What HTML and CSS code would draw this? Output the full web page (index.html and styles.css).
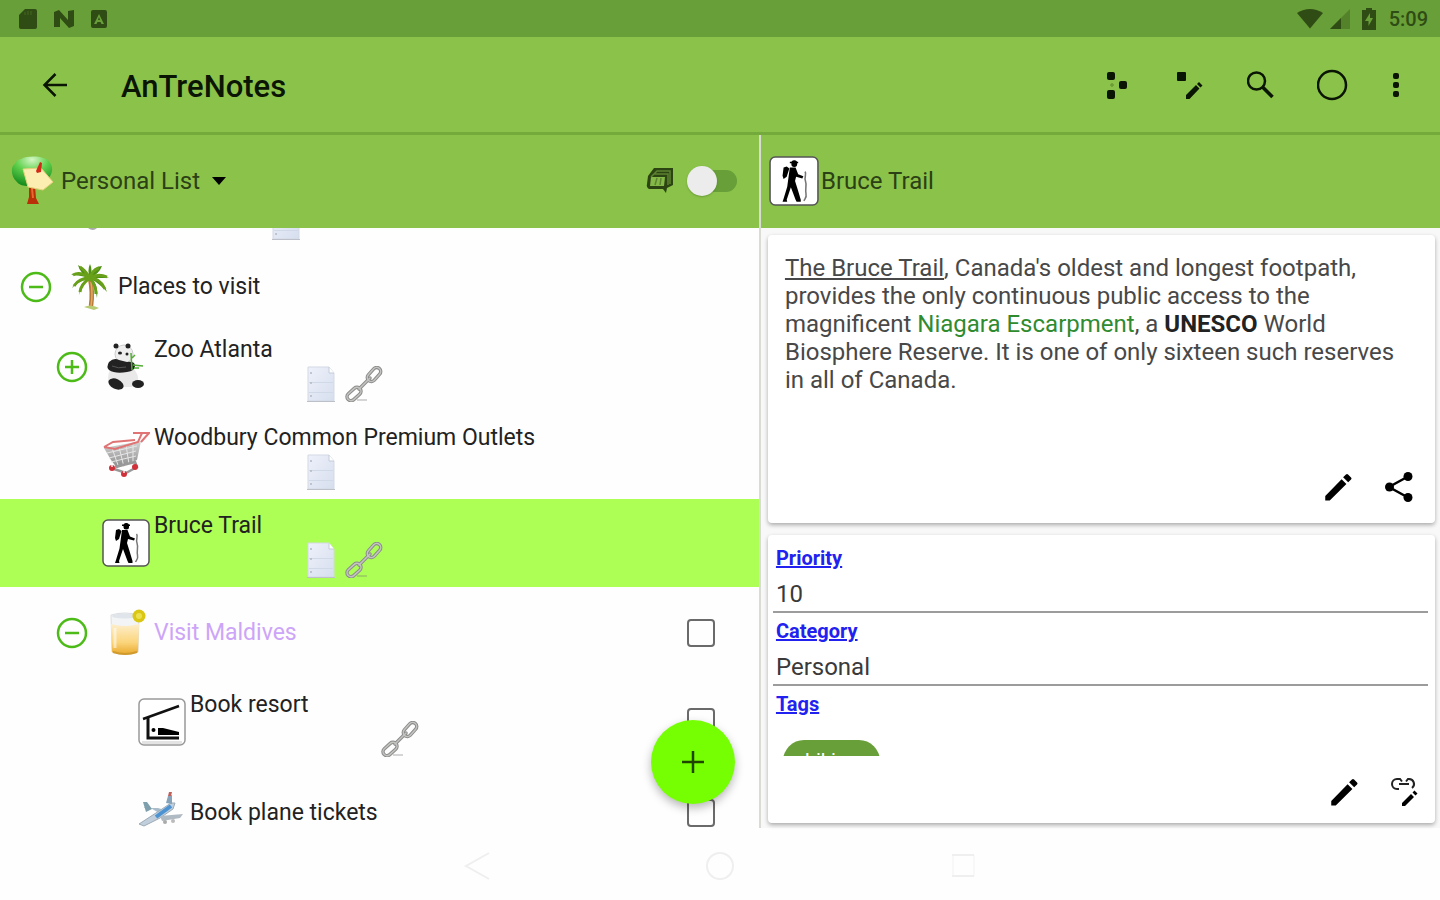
FILE: index.html
```html
<!DOCTYPE html>
<html lang="en">
<head>
<meta charset="utf-8">
<title>AnTreNotes</title>
<link rel="stylesheet" href="styles.css">
</head>
<body>
<svg class="sprite" aria-hidden="true">
  <defs>
    <linearGradient id="paper" x1="0" y1="0" x2="1" y2="1"><stop offset="0" stop-color="#eef1fa"/><stop offset="1" stop-color="#d6deee"/></linearGradient>
    <linearGradient id="juice" x1="0" y1="0" x2="0" y2="1"><stop offset="0" stop-color="#fdeecb"/><stop offset=".6" stop-color="#fbd57c"/><stop offset="1" stop-color="#e9a92c"/></linearGradient>
    <radialGradient id="leaf" cx=".5" cy=".1" r=".9"><stop offset="0" stop-color="#d5f7c6"/><stop offset=".45" stop-color="#5fd04c"/><stop offset="1" stop-color="#138a1c"/></radialGradient>
    <linearGradient id="steel" x1="0" y1="0" x2="0" y2="1"><stop offset="0" stop-color="#d5d5d5"/><stop offset="1" stop-color="#8b8b8b"/></linearGradient>
  </defs>
  <symbol id="pencil" viewBox="0 0 24 24"><path d="M3.500 18V21h3L17.600 10l-3.200-3.200zM20.700 7a1 1 0 0 0 0-1.400l-2-2a1 1 0 0 0-1.400 0l-1.900 1.900 3.400 3.400z"/></symbol>
  <symbol id="minus" viewBox="0 0 32 32"><circle cx="16" cy="16" r="14" fill="none" stroke="#4cbb17" stroke-width="2.500"/><path d="M9 16h14" stroke="#4cbb17" stroke-width="2.500"/></symbol>
  <symbol id="plus" viewBox="0 0 32 32"><circle cx="16" cy="16" r="14" fill="none" stroke="#4cbb17" stroke-width="2.500"/><path d="M9 16h14M16 9v14" stroke="#4cbb17" stroke-width="2.500"/></symbol>
  <symbol id="note" viewBox="0 0 30 36"><path d="M2 1h21l5 6v28H2z" fill="url(#paper)" stroke="#d3d9e4"/><path d="M23 1v6h5" fill="#fff" stroke="#c4ccd8"/><path d="M3 16.500h24M3 26.500h24" stroke="#cfd9e8"/><path d="M1 35.500h28" stroke="#bdc0c8"/><circle cx="5" cy="7" r="1" fill="#b2b9c5"/><circle cx="5" cy="17" r="1" fill="#b2b9c5"/><circle cx="5" cy="30" r="1" fill="#b2b9c5"/></symbol>
  <symbol id="chain" viewBox="0 0 38 36"><path d="M12 34h10" stroke="#777" stroke-opacity=".3" stroke-width="2"/><g fill="none" stroke="#8c8c8c" stroke-width="3.500"><rect x="-8" y="-4" width="16" height="8" rx="4" transform="translate(29 8.500) rotate(-48)"/><rect x="-8" y="-4" width="16" height="8" rx="4" transform="translate(9 28) rotate(-42)"/><path d="M14 23L25 12" stroke-linecap="round"/></g><g fill="none" stroke="#c4c4c0" stroke-width="1.500"><rect x="-8" y="-4" width="16" height="8" rx="4" transform="translate(29 8.500) rotate(-48)"/><rect x="-8" y="-4" width="16" height="8" rx="4" transform="translate(9 28) rotate(-42)"/><path d="M14 23L25 12" stroke-linecap="round"/></g></symbol>
  <symbol id="hiker" viewBox="0 0 48 48"><rect x="1" y="1" width="46" height="46" rx="5" fill="#fff" stroke="#555" stroke-width="1.500"/><rect x="21.500" y="4" width="5.500" height="6.500" rx="2.500"/><path d="M20 5.500h8v1.500h-8zM14 11l3-1 2.500 2-2.500 8-3 2-1-3z"/><path d="M20 11h5.500l2.500 6.500 5 2-1 2-6-1.500-1 4 2.500 8 3 10v2h-4l-1-2-4.500-12-4 12 .5 2H13l1-3 3.500-11.500z"/><path d="M34.500 15c2 2-1 5 .5 9s-.5 8 .5 12-1 5-2 7" fill="none" stroke="#777" stroke-width="1.500"/></symbol>
</svg>

<header class="status-bar">
  <div class="status-group">
    <svg width="20" height="22" viewBox="0 0 20 22"><path d="M7 1h10a2 2 0 0 1 2 2v16a2 2 0 0 1-2 2H3a2 2 0 0 1-2-2V7z"/><path d="M7 4v3M10 3v4M13 3v4" stroke="#44691f"/></svg>
    <svg width="22" height="20" viewBox="0 0 22 20"><path d="M1 18V3l5-2 9 10V2l6-1v16l-5 2L7 9v9z"/></svg>
    <svg width="18" height="20" viewBox="0 0 18 20"><path d="M3 1h12a2 2 0 0 1 2 2v14a2 2 0 0 1-2 2H3a2 2 0 0 1-2-2V3a2 2 0 0 1 2-2zm6 4L4 15h2.500l1-2h3l1 2H14zm0 3l1 3H8z" fill-rule="evenodd"/></svg>
  </div>
  <div class="status-group status-right">
    <svg width="26" height="20" viewBox="0 0 26 20"><path d="M13 19.500L0 4q13-8 26 0z"/></svg>
    <svg width="22" height="20" viewBox="0 0 22 20"><path d="M21 0v20H1z" opacity=".35"/><path d="M12 9v11H1z"/></svg>
    <svg class="battery" width="16" height="22" viewBox="0 0 16 22"><path d="M5 0h6v2h4v20H1V2h4zm4 5L4 13h3.500v5l4.500-8H9z" fill-rule="evenodd"/></svg>
    <span class="clock">5:09</span>
  </div>
</header>

<div class="app-bar">
  <button class="back" aria-label="Back"><svg width="26" height="26" viewBox="0 0 26 26" fill="none" stroke="#0b1503" stroke-width="2.500"><path d="M25 13H3M13.500 2L2.500 13l11 11"/></svg></button>
  <h1>AnTreNotes</h1>
  <button class="action" aria-label="Tree view"><svg width="24" height="30" viewBox="0 0 24 30"><rect x="2" y="2" width="8" height="8" rx="2"/><rect x="2" y="20" width="8" height="9" rx="2"/><rect x="14" y="11" width="8" height="8" rx="2"/><path d="M7 13v4M5 15h4" stroke="#6c9a35" stroke-width="1.500"/></svg></button>
  <button class="action" aria-label="Edit node"><svg width="28" height="30" viewBox="0 0 28 30"><rect x="2" y="2" width="9" height="9" rx="1"/><path d="M11 29v-4l10-10 3.500 3.500L14.500 29zM22 14l2-2 3.500 3.500-2 2z"/></svg></button>
  <button class="action" aria-label="Search"><svg width="28" height="28" viewBox="0 0 28 28" fill="none" stroke="#0b1503"><circle cx="9.500" cy="10" r="8.500" stroke-width="2.500"/><path d="M15.500 16l10 10" stroke-width="3.500"/></svg></button>
  <button class="action" aria-label="Record"><svg width="32" height="32" viewBox="0 0 32 32" fill="none" stroke="#0b1503" stroke-width="2.500"><circle cx="15" cy="16" r="14"/></svg></button>
  <button class="action more" aria-label="More options"><svg width="8" height="26" viewBox="0 0 8 26"><rect x="1" y="1" width="6" height="6" rx="2"/><rect x="1" y="10" width="6" height="6" rx="2"/><rect x="1" y="19" width="6" height="6" rx="2"/></svg></button>
</div>

<main class="panes">
  <section class="tree-pane">
    <div class="pane-head">
      <svg width="43" height="50" viewBox="0 0 43 50"><path d="M18 30h6l1 12 3 6H16l2-7z" fill="#b92f08"/><path d="M21 32l1 10" stroke="#e66a30" stroke-width="2"/><path d="M10 3C16 0 26 0 32 2c6 1 10 7 9 13-1 8-10 13-19 13-6 4-14 1-16-2C-1 20 0 9 4 8c1-3 3-4 6-5z" fill="url(#leaf)"/><path d="M12 13l18-1 12 14-10 8-15-3z" fill="#fbeeb0" stroke="#e4d27c"/><path d="M25 15l4-9 2 1-1 9-4 1z" fill="#d12a16"/></svg>
      <div class="picker"><select aria-label="List"><option>Personal List</option></select><svg width="14" height="8" viewBox="0 0 14 8"><path d="M0 0h14L7 8z"/></svg></div>
      <svg class="layers" width="30" height="28" viewBox="0 0 30 28"><path d="M9 1h19v17l-6 3-1 5-3-4H4q-3-2-2-5l1-8z" fill="#2c4312"/><path d="M6 10h14l-1 9H5z" fill="#84b947"/><path d="M8 8l4-4h13v13M6 10l3-3h14v11M12 11l-2 7M16 11l-1 7" fill="none" stroke="#5c8331" stroke-width="1.500"/></svg>
      <input type="checkbox" role="switch" class="switch" aria-label="Show layers">
    </div>

    <div class="tree">
      <div class="row cut">
        <svg width="14" height="4" viewBox="0 0 14 4"><path d="M2 0q5 4 9 0z" fill="#aaa"/></svg>
        <svg width="30" height="36"><use href="#note"/></svg>
      </div>
      <div class="row">
        <button class="toggle" aria-label="Collapse"><svg width="32" height="32"><use href="#minus"/></svg></button>
        <svg class="pic" viewBox="0 0 48 48"><path d="M24 15q3 14 1 28" fill="none" stroke="#b97a35" stroke-width="4.500"/><path d="M25 19q2 12 0 24" fill="none" stroke="#e0a96a" stroke-width="1.500"/><path d="M18 44q7-3 15 1l-5 2z" fill="#b7cb72"/><g fill="#4d8f12"><path d="M24 15Q18 5 12 2q2 9 12 13zM24 15Q13 7 5 12q8 0 19 3zM24 15Q12 13 6 25q5-6 18-10zM24 15q-11 4-11 17 2-9 11-17zM24 15q10-4 19 0-8 0-19 0zM24 15q12 0 17 14-6-7-17-14zM24 15q9 6 7 20-1-9-7-20zM24 15q3-12 12-12-3 8-12 12zM24 15q-3-8 0-14 3 6 0 14z"/></g><g fill="none" stroke="#69a01a" stroke-width="3"><path d="M24 15Q14 8 7 12M24 15Q13 15 8 23M24 15q-9 6-10 14M24 15q10 0 15 11M24 15q6 7 6 16M24 15q8-5 17-1M24 15Q19 7 14 4M24 15q2-8 9-10"/></g></svg>
        <span class="label">Places to visit</span>
      </div>
      <div class="row level-1 tall">
        <button class="toggle" aria-label="Expand"><svg width="32" height="32"><use href="#plus"/></svg></button>
        <svg class="pic" viewBox="0 0 48 48"><path d="M8 27q-4 8 0 17h22l6-5q1-8-5-14z" fill="#e9e9e9"/><ellipse cx="22" cy="11" rx="9" ry="9" fill="#eee" stroke="#ccc"/><g fill="#222"><circle cx="14" cy="3" r="2.500"/><circle cx="26" cy="3" r="2.500"/><ellipse cx="18" cy="10" rx="2" ry="1.500"/><ellipse cx="25" cy="11" rx="1.500" ry="1.500"/><path d="M7 19q5-5 10-2l8 2q8-1 8 4t-8 6q-12 2-18-2-3-3 0-8z"/><ellipse cx="14" cy="41" rx="8" ry="5" transform="rotate(25 14 41)"/><ellipse cx="36" cy="41" rx="6" ry="4"/></g><path d="M10 23q6 3 14 1" stroke="#555" fill="none"/><path d="M29 10l1 17M31 22l10 1M30 15l3-3M32 25l5 0" stroke="#52ae35" stroke-width="1.500"/></svg>
        <div class="label">Zoo Atlanta<div class="marks"><svg width="30" height="36"><use href="#note"/></svg><svg width="38" height="36"><use href="#chain"/></svg></div></div>
      </div>
      <div class="row level-1 tall">
        <span class="toggle"></span>
        <svg class="pic" viewBox="0 0 48 48"><path d="M2 17l37-7-4 19-20 8-6-8z" fill="url(#steel)"/><g fill="none" stroke="#e6e6e6"><path d="M5 22l30-7M7 27l27-7M9 31l25-6M10 17l7 20M17 16l5 20M24 14l3 19M31 13l0 18"/></g><path d="M13 36l20-5 2 5-11 6-12-4" fill="none" stroke="#999" stroke-width="2.500"/><path d="M2 16l11 2 23-7 4-9h6M31 2h16l-8 9M2 16l9-5 22-2" fill="none" stroke="#e07474" stroke-width="2"/><g fill="#d0303a"><circle cx="10" cy="37" r="3"/><circle cx="22" cy="43" r="3"/><circle cx="33" cy="36" r="3"/></g><g fill="#eee"><circle cx="10" cy="35" r="1"/><circle cx="22" cy="41" r="1"/></g></svg>
        <div class="label">Woodbury Common Premium Outlets<div class="marks"><svg width="30" height="36"><use href="#note"/></svg></div></div>
      </div>
      <div class="row level-1 tall selected">
        <span class="toggle"></span>
        <svg class="pic"><use href="#hiker"/></svg>
        <div class="label">Bruce Trail<div class="marks"><svg width="30" height="36"><use href="#note"/></svg><svg width="38" height="36"><use href="#chain"/></svg></div></div>
      </div>
      <div class="row level-1 roomy">
        <button class="toggle" aria-label="Collapse"><svg width="32" height="32"><use href="#minus"/></svg></button>
        <svg class="pic" viewBox="0 0 48 48"><path d="M9 6q14-4 28 0l-1 37q-12 5-26 0z" fill="#f2f4f6" stroke="#dcdee0"/><path d="M9 15q14 4 28 0l-1 28q-12 5-26 0z" fill="url(#juice)"/><path d="M13 19v20" stroke="#fff" stroke-opacity=".5" stroke-width="3"/><ellipse cx="23" cy="7" rx="13" ry="2.500" fill="#dfe5ea"/><path d="M11 43q12 4 24 0" stroke="#d19a2c" stroke-width="2" fill="none"/><circle cx="37" cy="7" r="6.500" fill="#d9c713"/><circle cx="37" cy="7" r="3" fill="#ece04e"/></svg>
        <label class="label done" for="maldives">Visit Maldives</label>
        <input type="checkbox" class="check" id="maldives">
      </div>
      <div class="row level-2 tall">
        <span class="toggle"></span>
        <svg class="pic" viewBox="0 0 48 48"><rect x="1" y="1" width="46" height="46" rx="5" fill="#fff" stroke="#999" stroke-width="1.500"/><path d="M4 43h40v3H4z" fill="#e3e3e3"/><path d="M5 21L41 8" stroke="#111" stroke-width="2.500"/><path d="M10 20v20h31" fill="none" stroke="#111" stroke-width="3"/><circle cx="15.500" cy="32" r="2"/><path d="M20 30h5l16 4v3H20z"/></svg>
        <div class="label"><label for="resort">Book resort</label><div class="marks"><span class="slot"></span><svg width="38" height="36"><use href="#chain"/></svg></div></div>
        <input type="checkbox" class="check" id="resort">
      </div>
      <div class="row level-2 roomy plane">
        <span class="toggle"></span>
        <svg class="pic" viewBox="0 0 48 48"><path d="M5 18l6 0 10 6 9-2-10-3" fill="#a9bccb"/><path d="M5 13l4 0 5 7-6 3z" fill="#7e9fac"/><path d="M1 35l20-13 12-8 4 0-2 6-13 9-16 8z" fill="#c0cfdb" stroke="#9dabb8"/><path d="M18 28l15-11" stroke="#4d93d2" stroke-width="4"/><path d="M22 27l23-2-3 4-18 3z" fill="#b0bac3"/><path d="M28 14l2-7 4-1 0 9z" fill="#86a3ba"/><path d="M30 7l1-4 3 0-1 4z" fill="#c0605a"/><circle cx="27" cy="33" r="2" fill="#aaa"/><circle cx="35" cy="32" r="2" fill="#bbb"/></svg>
        <label class="label" for="plane">Book plane tickets</label>
        <input type="checkbox" class="check" id="plane">
      </div>
    </div>
    <button class="fab" aria-label="Add"><svg width="22" height="22" viewBox="0 0 22 22" stroke="#1f4400" stroke-width="2.500"><path d="M0 11h22M11 0v22"/></svg></button>
  </section>

  <section class="detail-pane">
    <div class="pane-head">
      <svg width="50" height="50"><use href="#hiker"/></svg>
      <h2>Bruce Trail</h2>
    </div>
    <div class="cards">
      <article class="card">
        <p class="note-text"><u>The Bruce Trail</u>, Canada's oldest and longest footpath,<br>provides the only continuous public access to the<br>magnificent <a href="#">Niagara Escarpment</a>, a <b>UNESCO</b> World<br>Biosphere Reserve. It is one of only sixteen such reserves<br>in all of Canada.</p>
        <div class="card-actions">
          <button aria-label="Edit note"><svg width="36" height="36"><use href="#pencil"/></svg></button>
          <button aria-label="Share"><svg width="30" height="32" viewBox="0 0 30 32"><path d="M24 5.500L5 16l19 10.500" fill="none" stroke="#000" stroke-width="2.500"/><circle cx="24" cy="5.500" r="4.500"/><circle cx="5.500" cy="16" r="4.500"/><circle cx="24" cy="26.500" r="4.500"/></svg></button>
        </div>
      </article>
      <article class="card">
        <div class="fields">
          <label for="priority">Priority</label>
          <input type="text" id="priority" value="10">
          <label for="category">Category</label>
          <input type="text" id="category" value="Personal">
          <span class="field-name">Tags</span>
          <div class="chips"><span class="chip">hiking</span></div>
        </div>
        <div class="card-actions low">
          <button aria-label="Edit fields"><svg width="36" height="36"><use href="#pencil"/></svg></button>
          <button aria-label="Edit links"><svg width="30" height="32" viewBox="0 0 30 32"><path d="M9 13H7a5 5 0 0 1 0-10h3l2 2.500M9 8h10M16 5.500L18 3h1a5 5 0 0 1 3 9" fill="none" stroke="#222" stroke-width="2"/><path d="M12 30v-3l9-9 3 3-9 9zM22.500 16.500l2-2 3 3-2 2z"/></svg></button>
        </div>
      </article>
    </div>
  </section>
</main>

<nav class="system-nav">
  <button aria-label="System back"><svg width="32" height="32" viewBox="0 0 32 32"><path d="M28 3L5 16l23 13"/></svg></button>
  <button aria-label="Home"><svg width="32" height="32" viewBox="0 0 32 32"><circle cx="16" cy="16" r="13"/></svg></button>
  <button aria-label="Recent apps"><svg width="32" height="32" viewBox="0 0 32 32"><path d="M6 5v21M27 5v21" stroke-opacity=".4"/><path d="M5 5h22M5 26h22"/></svg></button>
</nav>
</body>
</html>
```
FILE: styles.css
```css
* { box-sizing: border-box; }

body {
  margin: 0;
  height: 100vh;
  display: flex;
  flex-direction: column;
  overflow: hidden;
  background: #fefefe;
  color: #222;
  font-family: Roboto, "Liberation Sans", sans-serif;
  font-size: 24px;
  line-height: 28px;
}

svg { display: block; flex: none; }

button {
  display: flex;
  align-items: center;
  justify-content: center;
  padding: 0;
  border: 0;
  background: none;
  cursor: pointer;
}

h1, h2, p { margin: 0; }

.sprite {
  position: absolute;
  width: 0;
  height: 0;
  overflow: hidden;
}

/* Bars */
.status-bar {
  flex: none;
  height: 37px;
  padding: 0 12px 0 18px;
  display: flex;
  align-items: center;
  justify-content: space-between;
  background: #689f38;
  color: #2f4c14;
  fill: #2f4c14;
}
.status-group { display: flex; align-items: center; gap: 15px; }
.status-right { gap: 4px; }
.status-right svg:first-child { margin-right: 2px; }
.battery { margin-left: 6px; }
.clock { margin-left: 8px; font-size: 20px; font-weight: 500; }

.app-bar {
  flex: none;
  height: 98px;
  padding: 0 17px 0 32px;
  display: flex;
  align-items: center;
  background: #8bc34a;
  border-bottom: 3px solid #74a93b;
  fill: #0b1503;
}
.back { width: 46px; height: 48px; }
.app-bar h1 {
  flex: 1;
  margin-left: 43px;
  padding-top: 4px;
  font-size: 31px;
  font-weight: 500;
  line-height: 36px;
  color: #0b1503;
}
.action { width: 72px; height: 48px; }
.more { width: 54px; }

.panes { flex: 1; min-height: 0; display: flex; }

.pane-head {
  flex: none;
  height: 93px;
  display: flex;
  align-items: center;
  background: #8bc34a;
}
.pane-head h2, .picker select {
  font: inherit;
  color: #2c4015;
}

/* Tree */
.tree-pane {
  flex: 760;
  min-width: 0;
  position: relative;
  display: flex;
  flex-direction: column;
  border-right: 2px solid #d8dcd4;
}
.tree-pane .pane-head { padding: 0 22px 2px 11px; }
.picker { display: flex; align-items: center; gap: 11px; margin-left: 7px; flex: 1; }
.picker select {
  appearance: none;
  padding: 0;
  border: 0;
  background: none;
}
.layers { margin-right: 24px; }
.switch {
  appearance: none;
  width: 38px;
  height: 22px;
  margin: 0;
  display: flex;
  align-items: center;
  border-radius: 11px;
  background: #689f38;
}
.switch::before {
  content: "";
  flex: none;
  width: 30px;
  height: 30px;
  margin-left: -12px;
  border-radius: 50%;
  background: #ececec;
  box-shadow: 0 1px 2px #4c7a2480;
}

.tree { flex: 1; min-height: 0; overflow: hidden; font-size: 23px; line-height: 30px; }
.row {
  height: 73px;
  padding: 0 44px 0 20px;
  display: flex;
  align-items: center;
}
.level-1 { padding-left: 56px; }
.level-2 { padding-left: 92px; }
.tall { height: 88px; }
.roomy { height: 91px; }
.plane { height: 94px; }
.cut {
  height: 22px;
  padding: 0 0 10px 86px;
  align-items: flex-end;
  gap: 171px;
  overflow: hidden;
}
.cut svg:first-child { align-self: flex-start; }
.selected { background: #adff55; }
.toggle { width: 32px; height: 32px; margin-right: 14px; flex: none; }
.pic { width: 48px; height: 48px; margin-right: 4px; }
.label { flex: 1; min-width: 0; }
.tall > .label { align-self: flex-start; padding-top: 12px; }
.done { color: #cda5f8; }
.marks { display: flex; gap: 9px; margin: 1px 0 0 152px; }
.slot { width: 30px; }

.check {
  appearance: none;
  width: 28px;
  height: 28px;
  margin: 0;
  border: 2px solid #6a6a6a;
  border-radius: 4px;
}

.fab {
  position: absolute;
  right: 24px;
  bottom: 24px;
  width: 84px;
  height: 84px;
  border-radius: 50%;
  background: #76ff03;
  box-shadow: 0 4px 10px #00000048;
}

/* Details */
.detail-pane {
  flex: 680;
  min-width: 0;
  display: flex;
  flex-direction: column;
}
.detail-pane .pane-head { padding: 0 0 2px 8px; gap: 2px; }
.cards {
  flex: 1;
  min-height: 0;
  display: flex;
  flex-direction: column;
  gap: 12px;
  padding: 7px 5px 5px 7px;
  background: #f8f8f8;
}
.card {
  flex: 1;
  min-height: 0;
  display: flex;
  flex-direction: column;
  border-radius: 4px;
  background: #fff;
  box-shadow: 0 2px 4px #00000050;
}
.note-text {
  flex: 1;
  padding: 19px 17px 0;
  line-height: 28px;
  color: #484848;
}
.note-text a { color: #2f8b2f; text-decoration: none; }
.note-text b { color: #222; }
.card-actions {
  display: flex;
  justify-content: flex-end;
  gap: 28px;
  padding: 0 21px 18px 0;
}
.low { padding: 18px 15px 13px 0; }

.fields { flex: 1; min-height: 0; overflow: hidden; padding: 9px 7px 0 5px; }
.fields label, .field-name {
  display: block;
  padding-left: 3px;
  font-size: 20px;
  font-weight: 700;
  color: #2222f0;
  text-decoration: underline;
}
.fields input {
  display: block;
  width: 100%;
  height: 41px;
  margin-bottom: 4px;
  padding: 4px 3px 0;
  border: 0;
  border-bottom: 2px solid #9c9c9c;
  background: none;
  font: inherit;
  color: #3a3a3a;
}
.chips { padding: 22px 10px 0; display: flex; }
.chip {
  padding: 0 22px;
  border-radius: 22px;
  background: #689f38;
  color: #fff;
  font-size: 20px;
  line-height: 42px;
}

.system-nav {
  flex: none;
  height: 72px;
  display: flex;
  align-items: center;
  justify-content: center;
  gap: 211px;
  padding-top: 4px;
}
.system-nav svg { fill: none; stroke: #efefef; stroke-width: 2; }
```
